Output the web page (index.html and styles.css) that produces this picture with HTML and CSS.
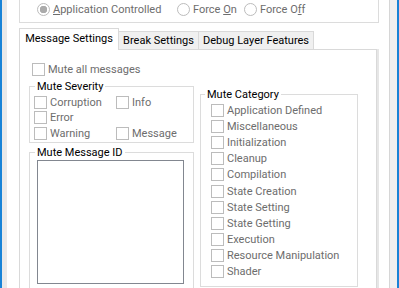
FILE: index.html
```html
<!DOCTYPE html>
<html lang="en">
<head>
    <meta charset="UTF-8">
    <meta name="viewport" content="width=device-width, initial-scale=1.0">
    <title>Debug Layer</title>
    <link rel="stylesheet" href="styles.css">
</head>
<body>
    <div class="window">
        <div class="edge-left"></div>
        <div class="content">
            <div class="mode-group">
                <label class="radio-item wide"><span class="radio on"></span><span><u>A</u>pplication Controlled</span></label>
                <label class="radio-item mid"><span class="radio"></span><span>Force <u>O</u>n</span></label>
                <label class="radio-item"><span class="radio"></span><span>Force O<u>f</u>f</span></label>
            </div>

            <div class="tabs">
                <div class="tab active">Message Settings</div>
                <div class="tab tab-break">Break Settings</div>
                <div class="tab tab-debug">Debug Layer Features</div>
            </div>

            <div class="panel">
                <div class="col-left">
                    <label class="check-row mute-all"><span class="check"></span>Mute all messages</label>

                    <fieldset class="group severity">
                        <legend>Mute Severity</legend>
                        <div class="severity-grid">
                            <label class="check-row"><span class="check"></span>Corruption</label>
                            <label class="check-row"><span class="check"></span>Info</label>
                            <label class="check-row"><span class="check"></span>Error</label>
                            <span></span>
                            <label class="check-row"><span class="check"></span>Warning</label>
                            <label class="check-row"><span class="check"></span>Message</label>
                        </div>
                    </fieldset>

                    <fieldset class="group message-id">
                        <legend>Mute Message ID</legend>
                        <div class="listbox"></div>
                    </fieldset>
                </div>

                <fieldset class="group category">
                    <legend>Mute Category</legend>
                    <div class="category-list">
                        <label class="check-row"><span class="check"></span>Application Defined</label>
                        <label class="check-row"><span class="check"></span>Miscellaneous</label>
                        <label class="check-row"><span class="check"></span>Initialization</label>
                        <label class="check-row"><span class="check"></span>Cleanup</label>
                        <label class="check-row"><span class="check"></span>Compilation</label>
                        <label class="check-row"><span class="check"></span>State Creation</label>
                        <label class="check-row"><span class="check"></span>State Setting</label>
                        <label class="check-row"><span class="check"></span>State Getting</label>
                        <label class="check-row"><span class="check"></span>Execution</label>
                        <label class="check-row"><span class="check"></span>Resource Manipulation</label>
                        <label class="check-row"><span class="check"></span>Shader</label>
                    </div>
                </fieldset>
            </div>
        </div>
        <div class="edge-right"></div>
    </div>
</body>
</html>
```

FILE: styles.css
```css
body {
    margin: 0;
    padding: 0;
    height: 288px;
    overflow: hidden;
    background-color: #fff;
    font-family: Roboto, "Liberation Sans", sans-serif;
    font-size: 11px;
    color: #000;
}

.window {
    display: flex;
    height: 288px;
    border-left: 2px solid #1883d7;
    border-right: 2px solid #1883d7;
}

.edge-left {
    width: 5px;
    background-color: #e9e9e9;
}

.content {
    width: 382px;
    overflow: hidden;
    background-color: #fff;
}

.edge-right {
    width: 7px;
    background-color: #f0f0f0;
    border-left: 1px solid #d6d6d6;
}

/* top radio group, its top edge is scrolled out of view */
.mode-group {
    box-sizing: border-box;
    display: flex;
    margin-left: 12px;
    width: 360px;
    height: 23px;
    padding: 2px 0 0 17px;
    border: 1px solid #dcdcdc;
    border-top: none;
}

.radio-item {
    display: flex;
    align-items: center;
    height: 14px;
    color: #6d6d6d;
    white-space: nowrap;
}

.radio-item.wide {
    width: 140px;
}

.radio-item.mid {
    width: 67px;
}

.radio {
    width: 11px;
    height: 11px;
    margin-right: 3px;
    border: 1px solid #bcbcbc;
    border-radius: 50%;
    background-color: #fff;
}

.radio.on {
    background: radial-gradient(circle, #ababab 0 3.5px, #fff 4px);
}

/* tabs */
.tabs {
    position: relative;
    z-index: 1;
    display: flex;
    align-items: flex-end;
    height: 22px;
    margin: 5px 0 -1px 12px;
}

.tab {
    box-sizing: border-box;
    border: 1px solid #d9d9d9;
    border-bottom: none;
    text-align: center;
    white-space: nowrap;
}

.tab.active {
    width: 100px;
    height: 22px;
    line-height: 20px;
    background-color: #fff;
}

.tab-break,
.tab-debug {
    height: 18px;
    margin: 0 0 1px -1px;
    line-height: 17px;
    background-color: #f0f0f0;
}

.tab-break {
    width: 81px;
}

.tab-debug {
    width: 116px;
}

.panel {
    box-sizing: border-box;
    display: flex;
    align-items: flex-start;
    gap: 6px;
    margin-left: 12px;
    width: 358px;
    height: 245px;
    padding: 11px 0 0 9px;
    border: 1px solid #d9d9d9;
    border-bottom: none;
    background-color: #fff;
    box-shadow: 2px 0 0 #e6e6e6;
}

.col-left {
    width: 165px;
}

/* checkboxes (all disabled) */
.check-row {
    display: flex;
    align-items: center;
    color: #6d6d6d;
    white-space: nowrap;
}

.check {
    width: 11px;
    height: 11px;
    margin-right: 3px;
    border: 1px solid #bcbcbc;
    background-color: #fff;
}

.mute-all {
    height: 16px;
    padding-left: 3px;
}

/* group boxes */
.group {
    margin: 0;
    padding: 0;
    min-width: 0;
    border: 1px solid #dcdcdc;
}

.group legend {
    padding: 0 2px;
    margin-left: 5px;
    line-height: 13px;
}

.severity {
    margin-top: 3px;
}

.severity-grid {
    display: grid;
    grid-template-columns: 82px 1fr;
    grid-auto-rows: 15.5px;
    padding: 1.5px 0 1px 4px;
}

.message-id {
    margin-top: 3px;
    padding-bottom: 10px;
    border-bottom: none;
}

.listbox {
    box-sizing: border-box;
    width: 147px;
    height: 124px;
    margin: 1px 0 0 7px;
    border: 1px solid #828790;
    background-color: #fff;
}

.category {
    width: 158px;
    box-sizing: border-box;
    margin-top: 27px;
}

.category legend {
    margin-left: 4px;
}

.category-list {
    display: grid;
    grid-auto-rows: 16.2px;
    padding: 1px 0 6px 10px;
}
```
